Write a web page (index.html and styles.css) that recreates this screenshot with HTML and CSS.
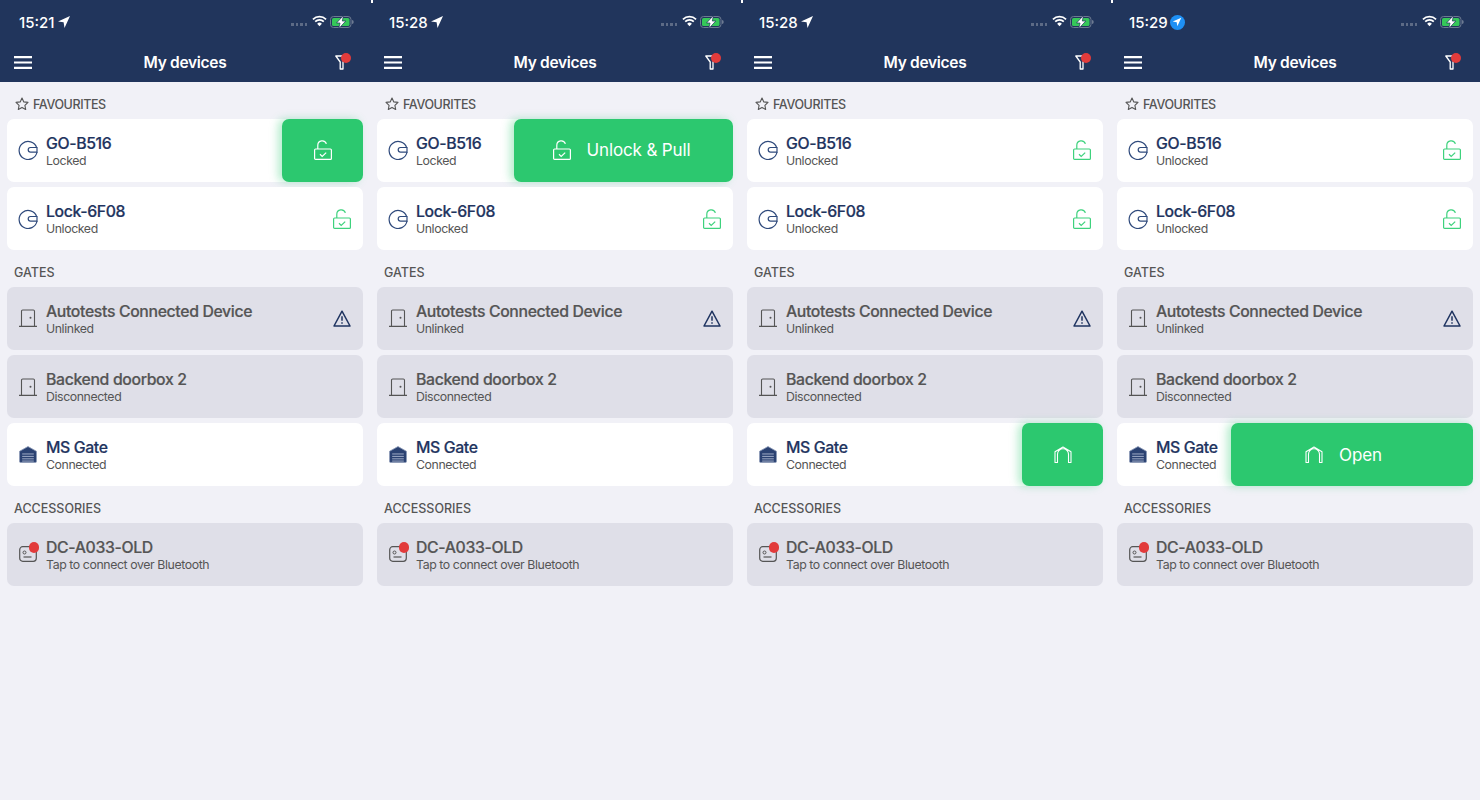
FILE: index.html
```html
<!DOCTYPE html>
<html lang="en">
<head>
    <meta charset="UTF-8">
    <meta name="viewport" content="width=device-width, initial-scale=1.0">
    <title>My devices</title>
    <link rel="stylesheet" href="styles.css">
</head>
<body>
    <svg class="sprites" xmlns="http://www.w3.org/2000/svg">
        <symbol id="i-arrow" viewBox="0 0 14 14"><path d="M13 1 1 6.4l5.6.9.9 5.7z" fill="currentColor"/></symbol>
        <symbol id="i-wifi" viewBox="0 0 16 12"><path d="M1 4.200a10 10 0 0 1 14 0M3.400 6.700a6.600 6.600 0 0 1 9.200 0" fill="none" stroke="currentColor" stroke-width="1.800"/><path d="M5.500 8.900a3.500 3.500 0 0 1 5 0L8 11.500z" fill="currentColor"/></symbol>
        <symbol id="i-battery" viewBox="0 0 24 12"><rect x=".5" y=".5" width="20.500" height="11" rx="3" fill="none" stroke="#6d7a92"/><rect x="2" y="2" width="17.500" height="8" rx="1.600" fill="#35c759"/><path d="M22 4v4c1 0 1.700-.9 1.700-2S23 4 22 4z" fill="#6d7a92"/><path d="M13.500 -.5 6.500 7h3.500L8.800 12.500l7-7.500h-3.500z" fill="#fff" stroke="#21355c" stroke-width=".7"/></symbol>
        <symbol id="i-menu" viewBox="0 0 18 13"><path d="M0 1.200h18M0 6.500h18M0 11.800h18" stroke="currentColor" stroke-width="2.200" fill="none"/></symbol>
        <symbol id="i-filter" viewBox="0 0 13 15"><path d="M.8 1h11.400L8 7v7H5.200V7z" fill="none" stroke="currentColor" stroke-width="1.300" stroke-linejoin="round"/></symbol>
        <symbol id="i-star" viewBox="0 0 14 14"><path d="m7 1 1.800 3.900 4.200.5-3.100 2.900.8 4.200L7 10.400l-3.700 2.100.8-4.200L1 5.400l4.200-.5z" fill="none" stroke="currentColor" stroke-width="1.100" stroke-linejoin="round"/></symbol>
        <symbol id="i-lock" viewBox="0 0 20 20"><path d="M18.700 7.700A9 9 0 1 0 19 12" fill="none" stroke="currentColor" stroke-width="1.200"/><path d="M19 7.500h-6.500a2.300 2.300 0 0 0 0 4.600H19z" fill="none" stroke="currentColor" stroke-width="1.200"/></symbol>
        <symbol id="i-unlocked" viewBox="0 0 18 20"><rect x=".6" y="9" width="16.800" height="10.400" rx="1" fill="none" stroke="currentColor" stroke-width="1.200"/><path d="M3.800 9V5.200a4.400 4.400 0 0 1 8.600-1.300" fill="none" stroke="currentColor" stroke-width="1.200"/><path d="m6 14.300 2.200 2.100 4-3.800" fill="none" stroke="currentColor" stroke-width="1.200"/></symbol>
        <symbol id="i-door" viewBox="-1 -1 20 20"><path d="M0 17.400h18M2.500 17.400V2.200c0-.7.500-1.200 1.200-1.200h10.600c.7 0 1.200.5 1.200 1.200v15.200" fill="none" stroke="currentColor" stroke-width="1.100"/><circle cx="11.500" cy="8.800" r="1" fill="currentColor"/></symbol>
        <symbol id="i-warning" viewBox="0 0 18 17"><path d="M9 1.200 17 16H1z" fill="none" stroke="currentColor" stroke-width="1.500" stroke-linejoin="round"/><path d="M9 6.200v4.600M9 12.200v1.600" stroke="currentColor" stroke-width="1.500" fill="none"/></symbol>
        <symbol id="i-garage" viewBox="0 0 17 16"><path d="M8.500.5 16.500 5v9.500a1 1 0 0 1-1 1h-14a1 1 0 0 1-1-1V5z" fill="#2b4272" stroke="#8d9bb8" stroke-width=".8"/><path d="M3 7.500h11M3 9.800h11M3 12.100h11M3 14.200h11" stroke="#b6c0d6" stroke-width=".8" fill="none"/></symbol>
        <symbol id="i-gate" viewBox="0 0 18 17"><path d="M1 16.500V5.800L9 1l8 4.800v10.700h-2.500V8.200a5.500 5.500 0 0 0-11 0v8.300z" fill="none" stroke="currentColor" stroke-width="1.100" stroke-linejoin="round"/></symbol>
        <symbol id="i-accessory" viewBox="-1 -2 20 20"><rect x=".7" y=".7" width="16.600" height="14.600" rx="3" fill="none" stroke="currentColor" stroke-width="1.200"/><circle cx="5.500" cy="6.500" r="1.500" fill="none" stroke="currentColor"/><path d="M4.500 11h8" stroke="currentColor" stroke-width="1.200" fill="none"/></symbol>
    </svg>

    <div class="screens">

        <div class="phone">
            <div class="topbar">
                <div class="status">
                    <span class="time">15:21</span>
                    <svg class="loc"><use href="#i-arrow"/></svg>
                    <span class="signal"><i></i><i></i><i></i><i></i></span>
                    <svg class="wifi"><use href="#i-wifi"/></svg>
                    <svg class="battery"><use href="#i-battery"/></svg>
                </div>
                <div class="nav">
                    <svg class="menu"><use href="#i-menu"/></svg>
                    <h1>My devices</h1>
                    <span class="filter"><svg><use href="#i-filter"/></svg></span>
                </div>
            </div>
            <div class="section first"><svg class="star"><use href="#i-star"/></svg>FAVOURITES</div>
            <div class="list">
                <div class="card">
                    <svg class="icon"><use href="#i-lock"/></svg>
                    <div class="info"><div class="name">GO-B516</div><div class="state">Locked</div></div>
                    <div class="action"><svg class="action-icon"><use href="#i-unlocked"/></svg></div>
                </div>
                <div class="card">
                    <svg class="icon"><use href="#i-lock"/></svg>
                    <div class="info"><div class="name">Lock-6F08</div><div class="state">Unlocked</div></div>
                    <svg class="end ok"><use href="#i-unlocked"/></svg>
                </div>
            </div>
            <div class="section">GATES</div>
            <div class="list">
                <div class="card off">
                    <svg class="icon"><use href="#i-door"/></svg>
                    <div class="info"><div class="name">Autotests Connected Device</div><div class="state">Unlinked</div></div>
                    <svg class="end warn"><use href="#i-warning"/></svg>
                </div>
                <div class="card off">
                    <svg class="icon"><use href="#i-door"/></svg>
                    <div class="info"><div class="name">Backend doorbox 2</div><div class="state">Disconnected</div></div>
                </div>
                <div class="card">
                    <svg class="icon garage"><use href="#i-garage"/></svg>
                    <div class="info"><div class="name">MS Gate</div><div class="state">Connected</div></div>
                </div>
            </div>
            <div class="section">ACCESSORIES</div>
            <div class="list">
                <div class="card off">
                    <span class="icon-wrap"><svg class="icon"><use href="#i-accessory"/></svg></span>
                    <div class="info"><div class="name">DC-A033-OLD</div><div class="state">Tap to connect over Bluetooth</div></div>
                </div>
            </div>
        </div>

        <div class="phone">
            <div class="topbar">
                <div class="status">
                    <span class="time">15:28</span>
                    <svg class="loc"><use href="#i-arrow"/></svg>
                    <span class="signal"><i></i><i></i><i></i><i></i></span>
                    <svg class="wifi"><use href="#i-wifi"/></svg>
                    <svg class="battery"><use href="#i-battery"/></svg>
                </div>
                <div class="nav">
                    <svg class="menu"><use href="#i-menu"/></svg>
                    <h1>My devices</h1>
                    <span class="filter"><svg><use href="#i-filter"/></svg></span>
                </div>
            </div>
            <div class="section first"><svg class="star"><use href="#i-star"/></svg>FAVOURITES</div>
            <div class="list">
                <div class="card">
                    <svg class="icon"><use href="#i-lock"/></svg>
                    <div class="info"><div class="name">GO-B516</div><div class="state">Locked</div></div>
                    <div class="action wide-pull"><svg class="action-icon"><use href="#i-unlocked"/></svg>Unlock &amp; Pull</div>
                </div>
                <div class="card">
                    <svg class="icon"><use href="#i-lock"/></svg>
                    <div class="info"><div class="name">Lock-6F08</div><div class="state">Unlocked</div></div>
                    <svg class="end ok"><use href="#i-unlocked"/></svg>
                </div>
            </div>
            <div class="section">GATES</div>
            <div class="list">
                <div class="card off">
                    <svg class="icon"><use href="#i-door"/></svg>
                    <div class="info"><div class="name">Autotests Connected Device</div><div class="state">Unlinked</div></div>
                    <svg class="end warn"><use href="#i-warning"/></svg>
                </div>
                <div class="card off">
                    <svg class="icon"><use href="#i-door"/></svg>
                    <div class="info"><div class="name">Backend doorbox 2</div><div class="state">Disconnected</div></div>
                </div>
                <div class="card">
                    <svg class="icon garage"><use href="#i-garage"/></svg>
                    <div class="info"><div class="name">MS Gate</div><div class="state">Connected</div></div>
                </div>
            </div>
            <div class="section">ACCESSORIES</div>
            <div class="list">
                <div class="card off">
                    <span class="icon-wrap"><svg class="icon"><use href="#i-accessory"/></svg></span>
                    <div class="info"><div class="name">DC-A033-OLD</div><div class="state">Tap to connect over Bluetooth</div></div>
                </div>
            </div>
        </div>

        <div class="phone">
            <div class="topbar">
                <div class="status">
                    <span class="time">15:28</span>
                    <svg class="loc"><use href="#i-arrow"/></svg>
                    <span class="signal"><i></i><i></i><i></i><i></i></span>
                    <svg class="wifi"><use href="#i-wifi"/></svg>
                    <svg class="battery"><use href="#i-battery"/></svg>
                </div>
                <div class="nav">
                    <svg class="menu"><use href="#i-menu"/></svg>
                    <h1>My devices</h1>
                    <span class="filter"><svg><use href="#i-filter"/></svg></span>
                </div>
            </div>
            <div class="section first"><svg class="star"><use href="#i-star"/></svg>FAVOURITES</div>
            <div class="list">
                <div class="card">
                    <svg class="icon"><use href="#i-lock"/></svg>
                    <div class="info"><div class="name">GO-B516</div><div class="state">Unlocked</div></div>
                    <svg class="end ok"><use href="#i-unlocked"/></svg>
                </div>
                <div class="card">
                    <svg class="icon"><use href="#i-lock"/></svg>
                    <div class="info"><div class="name">Lock-6F08</div><div class="state">Unlocked</div></div>
                    <svg class="end ok"><use href="#i-unlocked"/></svg>
                </div>
            </div>
            <div class="section">GATES</div>
            <div class="list">
                <div class="card off">
                    <svg class="icon"><use href="#i-door"/></svg>
                    <div class="info"><div class="name">Autotests Connected Device</div><div class="state">Unlinked</div></div>
                    <svg class="end warn"><use href="#i-warning"/></svg>
                </div>
                <div class="card off">
                    <svg class="icon"><use href="#i-door"/></svg>
                    <div class="info"><div class="name">Backend doorbox 2</div><div class="state">Disconnected</div></div>
                </div>
                <div class="card">
                    <svg class="icon garage"><use href="#i-garage"/></svg>
                    <div class="info"><div class="name">MS Gate</div><div class="state">Connected</div></div>
                    <div class="action"><svg class="action-icon gate"><use href="#i-gate"/></svg></div>
                </div>
            </div>
            <div class="section">ACCESSORIES</div>
            <div class="list">
                <div class="card off">
                    <span class="icon-wrap"><svg class="icon"><use href="#i-accessory"/></svg></span>
                    <div class="info"><div class="name">DC-A033-OLD</div><div class="state">Tap to connect over Bluetooth</div></div>
                </div>
            </div>
        </div>

        <div class="phone">
            <div class="topbar">
                <div class="status">
                    <span class="time">15:29</span>
                    <span class="loc-badge"><svg><use href="#i-arrow"/></svg></span>
                    <span class="signal"><i></i><i></i><i></i><i></i></span>
                    <svg class="wifi"><use href="#i-wifi"/></svg>
                    <svg class="battery"><use href="#i-battery"/></svg>
                </div>
                <div class="nav">
                    <svg class="menu"><use href="#i-menu"/></svg>
                    <h1>My devices</h1>
                    <span class="filter"><svg><use href="#i-filter"/></svg></span>
                </div>
            </div>
            <div class="section first"><svg class="star"><use href="#i-star"/></svg>FAVOURITES</div>
            <div class="list">
                <div class="card">
                    <svg class="icon"><use href="#i-lock"/></svg>
                    <div class="info"><div class="name">GO-B516</div><div class="state">Unlocked</div></div>
                    <svg class="end ok"><use href="#i-unlocked"/></svg>
                </div>
                <div class="card">
                    <svg class="icon"><use href="#i-lock"/></svg>
                    <div class="info"><div class="name">Lock-6F08</div><div class="state">Unlocked</div></div>
                    <svg class="end ok"><use href="#i-unlocked"/></svg>
                </div>
            </div>
            <div class="section">GATES</div>
            <div class="list">
                <div class="card off">
                    <svg class="icon"><use href="#i-door"/></svg>
                    <div class="info"><div class="name">Autotests Connected Device</div><div class="state">Unlinked</div></div>
                    <svg class="end warn"><use href="#i-warning"/></svg>
                </div>
                <div class="card off">
                    <svg class="icon"><use href="#i-door"/></svg>
                    <div class="info"><div class="name">Backend doorbox 2</div><div class="state">Disconnected</div></div>
                </div>
                <div class="card">
                    <svg class="icon garage"><use href="#i-garage"/></svg>
                    <div class="info"><div class="name">MS Gate</div><div class="state">Connected</div></div>
                    <div class="action wide-open"><svg class="action-icon gate"><use href="#i-gate"/></svg>Open</div>
                </div>
            </div>
            <div class="section">ACCESSORIES</div>
            <div class="list">
                <div class="card off">
                    <span class="icon-wrap"><svg class="icon"><use href="#i-accessory"/></svg></span>
                    <div class="info"><div class="name">DC-A033-OLD</div><div class="state">Tap to connect over Bluetooth</div></div>
                </div>
            </div>
        </div>

    </div>
</body>
</html>
```

FILE: styles.css
```css
body {
    margin: 0;
    font-family: Inter, "Noto Sans", sans-serif;
    background-color: #f1f1f7;
}
.sprites {
    display: none;
}
.screens {
    display: flex;
    height: 800px;
    overflow: hidden;
}
.phone {
    width: 370px;
    height: 800px;
    flex: none;
    background-color: #f1f1f7;
}
.topbar {
    position: relative;
    height: 82px;
    background-color: #21355c;
    color: #ffffff;
}
/* corner of the next screenshot showing through */
.phone + .phone .topbar::before {
    content: "";
    position: absolute;
    top: 0;
    left: 1px;
    width: 2px;
    height: 3px;
    background-color: #ffffff;
}
.status {
    display: flex;
    align-items: center;
    height: 44px;
    padding: 0 16px 0 19px;
}
.time {
    font-size: 15px;
    font-weight: 500;
}
.loc {
    width: 14px;
    height: 14px;
    margin-left: 2px;
    color: #ffffff;
}
.loc-badge {
    display: flex;
    align-items: center;
    justify-content: center;
    width: 15px;
    height: 15px;
    margin-left: 2px;
    border-radius: 50%;
    background-color: #1e90f5;
}
.loc-badge svg {
    width: 10px;
    height: 10px;
    color: #ffffff;
}
.signal {
    display: flex;
    gap: 2px;
    margin-left: auto;
    padding-top: 5px;
}
.signal i {
    width: 2.5px;
    height: 2.5px;
    background-color: #5d6b86;
}
.wifi {
    width: 15px;
    height: 12px;
    margin-left: 5px;
    margin-top: -2px;
    color: #ffffff;
}
.battery {
    width: 24px;
    height: 12px;
    margin-left: 3px;
}
.nav {
    display: flex;
    align-items: center;
    justify-content: space-between;
    height: 36px;
    padding: 0 21px 0 14px;
}
.nav h1 {
    margin: 0 0 0 3px;
    font-size: 15.5px;
    font-weight: 600;
    letter-spacing: -0.3px;
}
.menu {
    width: 18px;
    height: 13px;
    color: #ffffff;
}
.filter {
    position: relative;
    display: block;
    width: 13px;
    height: 15px;
    margin-top: 1px;
    margin-right: 1px;
    color: #ffffff;
}
.filter svg {
    display: block;
    width: 13px;
    height: 15px;
}
.filter::after {
    content: "";
    position: absolute;
    top: -2px;
    right: -3px;
    width: 10px;
    height: 10px;
    border-radius: 50%;
    background-color: #e23b3b;
}
.section {
    display: flex;
    align-items: center;
    height: 36.2px;
    padding-top: 8px;
    padding-left: 14px;
    box-sizing: border-box;
    font-size: 12.5px;
    font-weight: 500;
    color: #555555;
}
.section.first {
    height: 36.8px;
    padding-left: 15px;
    letter-spacing: -0.4px;
}
.star {
    width: 14px;
    height: 14px;
    margin-right: 4px;
    color: #555555;
}
.list {
    display: flex;
    flex-direction: column;
    gap: 5px;
    margin: 0 7px;
}
.card {
    display: flex;
    align-items: center;
    height: 63.3px;
    padding-left: 11px;
    box-sizing: border-box;
    border-radius: 7px;
    background-color: #ffffff;
    color: #1f3460;
}
.card.off {
    background-color: #dfdfe8;
    color: #555555;
}
.icon {
    display: block;
    width: 20px;
    height: 20px;
    flex: none;
    color: #2f4a7c;
}
.card.off .icon {
    color: #555555;
}
.icon.garage {
    width: 18px;
    height: 17px;
    margin: 0 1px;
}
.icon-wrap {
    position: relative;
    display: block;
    flex: none;
}
.icon-wrap::after {
    content: "";
    position: absolute;
    top: -2px;
    right: -1px;
    width: 10.5px;
    height: 10.5px;
    border-radius: 50%;
    background-color: #e23b3b;
}
.info {
    margin-left: 8px;
    white-space: nowrap;
}
.name {
    padding-top: 1px;
    font-size: 15.8px;
    font-weight: 500;
    line-height: 20px;
    letter-spacing: -0.35px;
    -webkit-text-stroke: 0.2px currentColor;
}
.state {
    margin-top: -1px;
    font-size: 12.3px;
    line-height: 15px;
    letter-spacing: -0.4px;
    color: #555555;
}
.end {
    width: 18px;
    height: 20px;
    margin-left: auto;
    margin-right: 12px;
}
.end.ok {
    color: #3ed27d;
}
.end.warn {
    height: 17px;
    color: #1f3460;
}
.action {
    display: flex;
    align-items: center;
    justify-content: center;
    align-self: stretch;
    width: 81px;
    margin-left: auto;
    border-radius: 7px;
    background-color: #2cc86f;
    box-shadow: -4px 0 8px rgba(44, 200, 111, 0.35);
    color: #ffffff;
    font-size: 17px;
    letter-spacing: -0.15px;
}
.action.wide-pull {
    width: 219px;
    padding-right: 4px;
    box-sizing: border-box;
}
.action.wide-open {
    width: 242px;
    padding-right: 17px;
    box-sizing: border-box;
}
.action-icon {
    width: 18px;
    height: 20px;
    flex: none;
}
.wide-pull .action-icon, .wide-open .action-icon {
    margin-right: 16px;
}
.action-icon.gate {
    height: 17px;
}
```
